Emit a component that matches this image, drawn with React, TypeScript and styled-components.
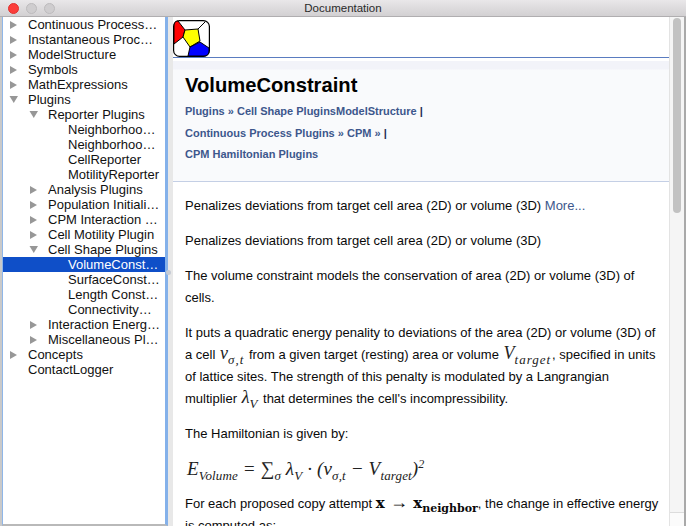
import React from "react";
import styled, { createGlobalStyle } from "styled-components";

const GlobalStyle = createGlobalStyle`
  html, body {
    margin: 0;
    padding: 0;
    width: 686px;
    height: 526px;
    overflow: hidden;
    background: #e8e8e8;
  }
`;

const Window = styled.div`
  width: 686px;
  height: 526px;
  display: flex;
  flex-direction: column;
  overflow: hidden;
  font-family: "Liberation Sans", Arial, sans-serif;
  background: #ececec;
`;

const TitleBar = styled.div`
  height: 16px;
  flex: none;
  display: flex;
  align-items: center;
  position: relative;
  background: linear-gradient(#e9e7e9, #d2d0d2);
  border-bottom: 1px solid #b0aeb0;
  justify-content: center;
  font-size: 11.5px;
  color: #2a2a2a;
`;

const Lights = styled.div`
  position: absolute;
  left: 8px;
  top: 3px;
  display: flex;
  gap: 7px;
`;

const Light = styled.span<{ $color: string; $edge: string }>`
  width: 11px;
  height: 11px;
  border-radius: 50%;
  background: ${(p) => p.$color};
  border: 0.5px solid ${(p) => p.$edge};
  box-sizing: border-box;
`;

const Body = styled.div`
  flex: 1;
  min-height: 0;
  display: flex;
  background: #e8e8e8;
  border-left: 2px solid #c9c9c9;
  border-right: 2px solid #a9a9a9;
`;

const TreePane = styled.div`
  width: 162px;
  flex: none;
  background: #fff;
  border-left: 1px solid #8fb6e8;
  border-right: 3px solid #84b1ea;
  border-bottom: 2px solid #b9b9b9;
`;

const TreeRow = styled.div<{ $depth: number; $selected?: boolean }>`
  height: 15px;
  line-height: 15px;
  font-size: 13px;
  white-space: nowrap;
  display: flex;
  align-items: center;
  padding-left: ${(p) => 6 + p.$depth * 20}px;
  color: ${(p) => (p.$selected ? "#fff" : "#111")};
  background: ${(p) => (p.$selected ? "#0f4fc8" : "transparent")};
`;

const Arrow = styled.span`
  width: 19px;
  height: 15px;
  flex: none;
  display: flex;
  align-items: center;
`;

const Splitter = styled.div`
  width: 5px;
  flex: none;
  background: #e8e8e8;
  position: relative;
`;

const Grip = styled.span`
  position: absolute;
  left: -2px;
  top: 253px;
  width: 5px;
  height: 5px;
  border-radius: 50%;
  background: #c6cbd4;
`;

const ContentPane = styled.div`
  flex: 1;
  min-width: 0;
  display: flex;
  background: #fff;
`;

const Doc = styled.div`
  flex: 1;
  min-width: 0;
  overflow: hidden;
  color: #111;
`;

const TopBar = styled.div`
  height: 40px;
  border-bottom: 1px solid #5a7cc0;
  display: flex;
  align-items: flex-end;
`;

const Logo = styled.svg`
  width: 37px;
  height: 37px;
  display: block;
`;

const Header = styled.div`
  margin-top: 3px;
  height: 121px;
  box-sizing: border-box;
  padding: 12px 12px 0;
  background: linear-gradient(#f2f3f9 8px, #f9fafc 9px);
  border-bottom: 1px solid #c4cfe5;
`;

const Title = styled.h1`
  margin: 0 0 4px;
  font-size: 20.2px;
  line-height: 24px;
  font-weight: 700;
  color: #000;
`;

const Crumb = styled.div`
  font-size: 11px;
  font-weight: 700;
  line-height: 21.7px;
  color: #3d578c;
  white-space: nowrap;
`;

const CrumbBar = styled.span`
  color: #1f2f55;
`;

const Text = styled.div`
  padding: 0 8px 0 12px;
  font-size: 13px;
  line-height: 22px;
  color: #0a0a0a;
`;

const Para = styled.p`
  margin: 0 0 13px;
`;

const FirstPara = styled(Para)`
  margin-top: 13px;
`;

const More = styled.span`
  color: #3d578c;
`;

const MathInline = styled.span`
  font-family: "Liberation Serif", "DejaVu Serif", serif;
  font-style: italic;
  font-size: 18px;
  line-height: 0;
  margin: 0 1px;
  color: #222;
  & sub {
    font-size: 13px;
    letter-spacing: 1px;
    line-height: 0;
  }
`;

const MathBold = styled.span`
  font-family: "DejaVu Serif", serif;
  font-weight: 700;
  font-size: 15px;
  line-height: 0;
  & sub {
    font-size: 11px;
    line-height: 0;
  }
`;

const ThinArrow = styled.span`
  font-family: "Liberation Serif", serif;
  font-weight: 400;
  font-size: 18px;
`;

const Equation = styled.div`
  font-family: "Liberation Serif", "DejaVu Serif", serif;
  font-style: italic;
  font-size: 19px;
  line-height: 22px;
  letter-spacing: 0.15px;
  margin: 0 0 13px;
  padding-left: 2px;
  white-space: nowrap;
  color: #222;
  & sub {
    font-size: 13px;
    line-height: 0;
  }
  & sup {
    font-size: 12px;
    line-height: 0;
  }
`;

const ScrollTrack = styled.div`
  width: 15px;
  flex: none;
  background: #f5f5f5;
  border-left: 1px solid #e3e3e3;
  box-sizing: border-box;
  display: flex;
  flex-direction: column;
`;

const ScrollThumb = styled.div`
  height: 195px;
  margin: 1px 3px 0;
  border-radius: 4px;
  background: #c2c2c2;
`;

const ScrollCorner = styled.div`
  margin-top: auto;
  height: 13px;
  background: #fbfbfb;
  border-top: 1px solid #dcdcdc;
`;

type Item = { label: string; depth: number; arrow?: "closed" | "open"; selected?: boolean };

const items: Item[] = [
  { label: "Continuous Process…", depth: 0, arrow: "closed" },
  { label: "Instantaneous Proc…", depth: 0, arrow: "closed" },
  { label: "ModelStructure", depth: 0, arrow: "closed" },
  { label: "Symbols", depth: 0, arrow: "closed" },
  { label: "MathExpressions", depth: 0, arrow: "closed" },
  { label: "Plugins", depth: 0, arrow: "open" },
  { label: "Reporter Plugins", depth: 1, arrow: "open" },
  { label: "Neighborhoo…", depth: 2 },
  { label: "Neighborhoo…", depth: 2 },
  { label: "CellReporter", depth: 2 },
  { label: "MotilityReporter", depth: 2 },
  { label: "Analysis Plugins", depth: 1, arrow: "closed" },
  { label: "Population Initiali…", depth: 1, arrow: "closed" },
  { label: "CPM Interaction …", depth: 1, arrow: "closed" },
  { label: "Cell Motility Plugin", depth: 1, arrow: "closed" },
  { label: "Cell Shape Plugins", depth: 1, arrow: "open" },
  { label: "VolumeConst…", depth: 2, selected: true },
  { label: "SurfaceConst…", depth: 2 },
  { label: "Length Const…", depth: 2 },
  { label: "Connectivity…", depth: 2 },
  { label: "Interaction Energ…", depth: 1, arrow: "closed" },
  { label: "Miscellaneous Pl…", depth: 1, arrow: "closed" },
  { label: "Concepts", depth: 0, arrow: "closed" },
  { label: "ContactLogger", depth: 0 },
];

const TreeArrow = ({ kind }: { kind?: "closed" | "open" }) => (
  <Arrow>
    {kind === "closed" && (
      <svg width="9" height="10" viewBox="0 0 9 10">
        <path d="M1 1 L8 5 L1 9 Z" fill="#979797" />
      </svg>
    )}
    {kind === "open" && (
      <svg width="10" height="9" viewBox="0 0 10 9">
        <path d="M0.5 1 H9 L4.75 8 Z" fill="#979797" />
      </svg>
    )}
  </Arrow>
);

const CellLogo = () => (
  <Logo viewBox="0 0 37 37">
    <rect x="0.6" y="0.6" width="35.8" height="35.8" rx="6" fill="#fff" stroke="#000" strokeWidth="1.2" />
    <path d="M5 1 C2 1 1 3 1 6 V24 L10 17 L12 10 Z" fill="#f00" stroke="#000" />
    <path d="M12 10 L25 9 L27 21 L17 27 L10 17 Z" fill="#ff0" stroke="#000" />
    <path d="M17 27 L27 22 L36 28 V31 C36 34 34 36 31 36 H15 Z" fill="#00f" stroke="#000" />
    <path d="M25 9 L32 2" fill="none" stroke="#000" />
  </Logo>
);

export default function App() {
  return (
    <Window>
      <GlobalStyle />
      <TitleBar>
        <Lights>
          <Light $color="#fc3d3a" $edge="#e0322f" />
          <Light $color="#cfcdcf" $edge="#bdbbbd" />
          <Light $color="#cfcdcf" $edge="#bdbbbd" />
        </Lights>
        Documentation
      </TitleBar>
      <Body>
        <TreePane>
          {items.map((item, i) => (
            <TreeRow key={i} $depth={item.depth} $selected={item.selected}>
              <TreeArrow kind={item.arrow} />
              {item.label}
            </TreeRow>
          ))}
        </TreePane>
        <Splitter>
          <Grip />
        </Splitter>
        <ContentPane>
          <Doc>
            <TopBar>
              <CellLogo />
            </TopBar>
            <Header>
              <Title>VolumeConstraint</Title>
              <Crumb>
                Plugins » Cell Shape PluginsModelStructure <CrumbBar>|</CrumbBar>
              </Crumb>
              <Crumb>
                Continuous Process Plugins » CPM » <CrumbBar>|</CrumbBar>
              </Crumb>
              <Crumb>CPM Hamiltonian Plugins</Crumb>
            </Header>
            <Text>
              <FirstPara>
                Penalizes deviations from target cell area (2D) or volume (3D) <More>More...</More>
              </FirstPara>
              <Para>Penalizes deviations from target cell area (2D) or volume (3D)</Para>
              <Para>The volume constraint models the conservation of area (2D) or volume (3D) of cells.</Para>
              <Para>
                It puts a quadratic energy penality to deviations of the area (2D) or volume (3D) of a cell{" "}
                <MathInline>
                  v<sub>σ,t</sub>
                </MathInline>{" "}
                from a given target (resting) area or volume{" "}
                <MathInline>
                  V<sub>target</sub>
                </MathInline>
                , specified in units of lattice sites. The strength of this penalty is modulated by a
                Langrangian multiplier{" "}
                <MathInline>
                  λ<sub>V</sub>
                </MathInline>{" "}
                that determines the cell's incompressibility.
              </Para>
              <Para>The Hamiltonian is given by:</Para>
              <Equation>
                E<sub>Volume</sub> = ∑<sub>σ</sub> λ<sub>V</sub> · (v<sub>σ,t</sub> − V<sub>target</sub>)
                <sup>2</sup>
              </Equation>
              <Para>
                For each proposed copy attempt{" "}
                <MathBold>
                  x <ThinArrow>→</ThinArrow> x<sub>neighbor</sub>
                </MathBold>
                , the change in effective energy is computed as:
              </Para>
            </Text>
          </Doc>
          <ScrollTrack>
            <ScrollThumb />
            <ScrollCorner />
          </ScrollTrack>
        </ContentPane>
      </Body>
    </Window>
  );
}
